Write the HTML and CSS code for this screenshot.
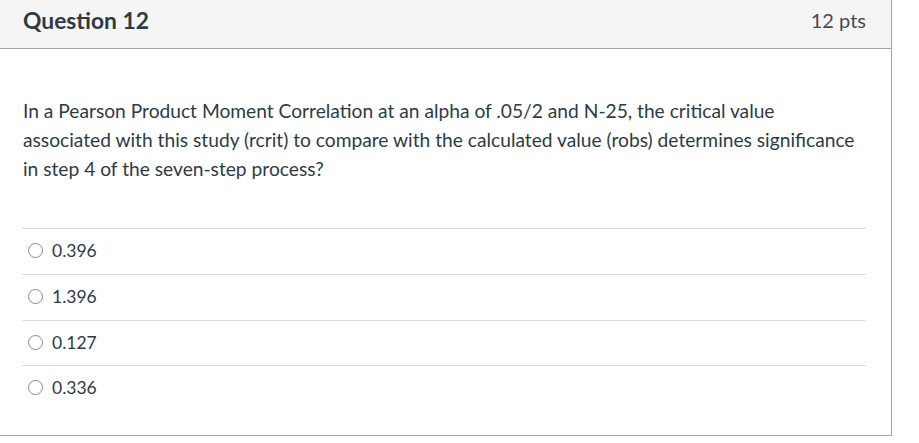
FILE: index.html
```html
<!DOCTYPE html>
<html>
<head>
<meta charset="utf-8">
<link rel="stylesheet" href="styles.css">
</head>
<body>
<div class="card">
  <div class="header">
    <span class="title">Question 12</span>
    <span class="pts">12 pts</span>
  </div>
  <div class="content">
    <p class="question">In a Pearson Product Moment Correlation at an alpha of .05/2 and N-25, the critical value associated with this study (rcrit) to compare with the calculated value (robs) determines significance in step 4 of the seven-step process?</p>
    <div class="answers">
      <label class="answer"><span class="radio"></span><span class="label">0.396</span></label>
      <label class="answer"><span class="radio"></span><span class="label">1.396</span></label>
      <label class="answer short"><span class="radio"></span><span class="label">0.127</span></label>
      <label class="answer short"><span class="radio"></span><span class="label">0.336</span></label>
    </div>
  </div>
</div>
</body>
</html>
```
FILE: styles.css
```css
html, body {
  margin: 0;
  padding: 0;
  background: #fff;
}
body {
  font-family: Lato, "Liberation Sans", sans-serif;
  color: #2d3b45;
}
.card {
  width: 891px;
  border-right: 1px solid #a5a5a5;
  border-bottom: 1px solid #a5a5a5;
}
.header {
  display: flex;
  justify-content: space-between;
  align-items: flex-start;
  height: 49px;
  padding: 6px 25px 0 23px;
  box-sizing: border-box;
  background: #f5f5f5;
  border-bottom: 1px solid #a5a5a5;
}
.title {
  font-size: 22.8px;
  font-weight: 700;
  line-height: 28px;
  color: #2d3b45;
}
.pts {
  font-size: 20px;
  line-height: 28px;
  color: #4a4a4a;
}
.content {
  padding: 47px 25px 25px 22px;
}
.question {
  margin: 0 0 45px 1px;
  font-size: 19.2px;
  line-height: 29px;
}
.answers {
  display: flex;
  flex-direction: column;
}
.answer {
  display: flex;
  align-items: center;
  height: 46px;
  border-top: 1px solid #dcdcdc;
  box-sizing: border-box;
  padding: 0 0 2px 6px;
  font-size: 17.5px;
}
.answer.short {
  height: 45px;
}
.radio {
  width: 15px;
  height: 15px;
  border: 1.5px solid #8a8a8a;
  border-radius: 50%;
  margin-right: 9px;
  box-sizing: border-box;
}
.label {
  color: #2d3b45;
}
```
